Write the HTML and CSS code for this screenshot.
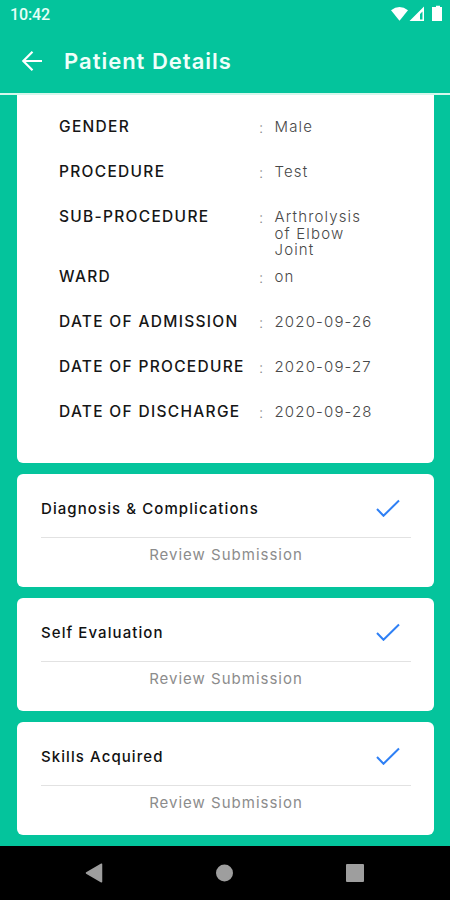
FILE: index.html
```html
<!DOCTYPE html>
<html lang="en">
<head>
    <meta charset="UTF-8">
    <meta name="viewport" content="width=device-width, initial-scale=1.0">
    <title>Patient Details</title>
    <link rel="stylesheet" href="styles.css">
</head>
<body>
    <!-- Status bar -->
    <div class="status-bar">
        <span class="time">10:42</span>
        <svg class="status-icons" width="54" height="18" viewBox="0 0 54 18" fill="#fff">
            <path d="M1 5.2Q9.500 -1.200 18 5.200L9.500 15.800Z"/>
            <path fill-rule="evenodd" d="M34 1.500V16H19.500ZM32.500 6.500L30 9V14.500H32.500Z"/>
            <path d="M44 2h2V0.700h4V2h2v14H42V2Z"/>
        </svg>
    </div>

    <!-- App bar -->
    <div class="app-bar">
        <svg class="back" width="22" height="22" viewBox="0 0 22 22" fill="none" stroke="#fff" stroke-width="2.200">
            <path d="M21 11H2.500M11.500 1.800L2.300 11L11.500 20.200"/>
        </svg>
        <h1>Patient Details</h1>
    </div>

    <div class="content">
        <div class="card details">
            <div class="row"><span class="label">GENDER</span><span class="colon">:</span><span class="value">Male</span></div>
            <div class="row"><span class="label">PROCEDURE</span><span class="colon">:</span><span class="value">Test</span></div>
            <div class="row"><span class="label">SUB-PROCEDURE</span><span class="colon">:</span><span class="value">Arthrolysis of Elbow Joint</span></div>
            <div class="row"><span class="label">WARD</span><span class="colon">:</span><span class="value">on</span></div>
            <div class="row"><span class="label">DATE OF ADMISSION</span><span class="colon">:</span><span class="value date">2020-09-26</span></div>
            <div class="row"><span class="label">DATE OF PROCEDURE</span><span class="colon">:</span><span class="value date">2020-09-27</span></div>
            <div class="row"><span class="label">DATE OF DISCHARGE</span><span class="colon">:</span><span class="value date">2020-09-28</span></div>
        </div>

        <!-- Submission cards -->
        <div class="card section">
            <div class="section-head">
                <h2>Diagnosis &amp; Complications</h2>
                <svg class="check" width="24" height="18" viewBox="0 0 24 18"><path d="M1 10L7.500 16.800L23 1.500"/></svg>
            </div>
            <div class="review">Review Submission</div>
        </div>
        <div class="card section">
            <div class="section-head">
                <h2>Self Evaluation</h2>
                <svg class="check" width="24" height="18" viewBox="0 0 24 18"><path d="M1 10L7.500 16.800L23 1.500"/></svg>
            </div>
            <div class="review">Review Submission</div>
        </div>
        <div class="card section">
            <div class="section-head">
                <h2>Skills Acquired</h2>
                <svg class="check" width="24" height="18" viewBox="0 0 24 18"><path d="M1 10L7.500 16.800L23 1.500"/></svg>
            </div>
            <div class="review">Review Submission</div>
        </div>
    </div>

    <!-- Android navigation -->
    <div class="nav-bar">
        <svg width="18" height="20" viewBox="0 0 18 20"><path d="M1.500 10L16.500 1.200V18.800Z" stroke-width="1.500" stroke-linejoin="round"/></svg>
        <svg width="18" height="18" viewBox="0 0 18 18"><circle cx="9.500" cy="9" r="8.500"/></svg>
        <svg width="20" height="20" viewBox="0 0 20 20"><rect x="1" y="1" width="18" height="18" rx="1"/></svg>
    </div>
</body>
</html>
```

FILE: styles.css
```css
* {
    box-sizing: border-box;
}
body {
    margin: 0;
    width: 450px;
    height: 900px;
    display: flex;
    flex-direction: column;
    overflow: hidden;
    background-color: #04c49c;
    font-family: Inter, "Open Sans", sans-serif;
}
.status-bar {
    height: 30px;
    padding: 0 6px 0 10px;
    display: flex;
    justify-content: space-between;
    align-items: center;
    color: #e6fff7;
}
.time {
    font: 500 16px/30px Roboto, sans-serif;
    letter-spacing: -0.1px;
}
.status-icons {
    margin-top: -2px;
}
.app-bar {
    height: 65px;
    padding: 0 21px 2px;
    display: flex;
    align-items: center;
    gap: 21px;
    border-bottom: 2px solid #d5f7ec;
}
.app-bar h1 {
    margin: 0;
    color: #effffa;
    font-size: 22px;
    font-weight: 600;
    letter-spacing: 1px;
}
.content {
    flex: 1;
    padding: 0 16px 11px 17px;
    display: flex;
    flex-direction: column;
    gap: 11px;
}
.card {
    background-color: #fff;
    border-radius: 6px;
}
.details {
    height: 368px;
    padding: 24px 42px 0;
    border-radius: 0 0 6px 6px;
}
.row {
    display: grid;
    grid-template-columns: 200px 15.5px 92px;
    min-height: 45px;
    font-size: 15px;
    line-height: 16.5px;
}
.row:nth-child(3) {
    min-height: 60px;
}
.label {
    color: #161616;
    font-size: 15.5px;
    font-weight: 500;
    letter-spacing: 1.3px;
    white-space: nowrap;
}
.colon {
    color: #888;
    padding-top: 1px;
    font-weight: 300;
}
.value {
    color: #484848;
    font-weight: 300;
    letter-spacing: 1.15px;
}
.date {
    white-space: nowrap;
}
.section {
    height: 113px;
    padding: 0 23px 0 24px;
}
.section-head {
    height: 64px;
    padding: 5px 11.5px 0 0;
    display: flex;
    justify-content: space-between;
    align-items: center;
    border-bottom: 1px solid #e2e2e2;
}
.section-head h2 {
    margin: 0;
    color: #111;
    font-size: 15px;
    font-weight: 500;
    letter-spacing: 1.08px;
}
.check {
    fill: none;
    stroke: #2f80f5;
    stroke-width: 2;
}
.review {
    color: #8c8c8c;
    font-size: 15px;
    font-weight: 400;
    letter-spacing: 1px;
    line-height: 33px;
    text-align: center;
}
.nav-bar {
    height: 54px;
    padding: 0 85px;
    display: flex;
    justify-content: space-between;
    align-items: center;
    background-color: #000;
}
.nav-bar svg {
    fill: #9e9e9e;
    stroke: #9e9e9e;
    stroke-width: 0;
    overflow: visible;
}
```
